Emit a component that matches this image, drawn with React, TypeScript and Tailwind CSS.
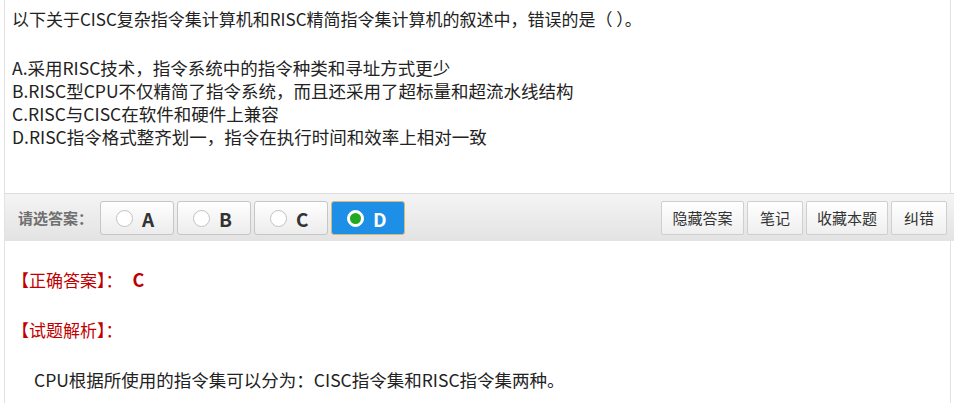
import React from "react"

const FONT = "font-['Microsoft_YaHei','Noto_Sans_CJK_SC',sans-serif]"

const options = ["A", "B", "C", "D"]

function Radio({ checked }: { checked: boolean }) {
  return (
    <span
      className={
        "inline-flex h-[17px] w-[17px] items-center justify-center rounded-full border " +
        (checked ? "border-white bg-white" : "border-[#c2c2c2] bg-white")
      }
    >
      {checked && <span className="h-[11px] w-[11px] rounded-full bg-[#22a822]" />}
    </span>
  )
}

function OptionButton({ label, checked }: { label: string; checked: boolean }) {
  return (
    <button
      className={
        "flex h-[34px] w-[74px] items-center gap-[9px] rounded-[3px] border pl-[15px] " +
        (checked
          ? "border-[#d6b878] bg-[#1e8fe6] text-white"
          : "border-[#c6c6c6] bg-gradient-to-b from-white to-[#ececec] text-[#333]")
      }
    >
      <Radio checked={checked} />
      <span className="text-[19px] font-bold leading-none">{label}</span>
    </button>
  )
}

function ToolButton({ children, width }: { children: React.ReactNode; width: string }) {
  return (
    <button
      className={
        "flex h-[34px] items-center justify-center rounded-[2px] border border-[#cfcfcf] bg-gradient-to-b from-white to-[#efefef] text-[15px] text-[#333] " +
        width
      }
    >
      {children}
    </button>
  )
}

export default function App() {
  return (
    <div className={"h-[403px] w-[954px] overflow-hidden bg-white " + FONT}>
      <div className="ml-[4px] mr-[3px] h-full border-x border-[#e2e2e2]">
        {/* question */}
        <div className="h-[193px] px-[7px] pt-[7px] text-[17px] leading-[23px] text-[#222]">
          <p>以下关于CISC复杂指令集计算机和RISC精简指令集计算机的叙述中，错误的是（ ）。</p>
          <div className="mt-[26px] text-[17.5px]">
            <p>A.采用RISC技术，指令系统中的指令种类和寻址方式更少</p>
            <p>B.RISC型CPU不仅精简了指令系统，而且还采用了超标量和超流水线结构</p>
            <p>C.RISC与CISC在软件和硬件上兼容</p>
            <p>D.RISC指令格式整齐划一，指令在执行时间和效率上相对一致</p>
          </div>
        </div>

        {/* answer bar */}
        <div className="-mr-[4px] flex h-[48px] items-start border-t border-[#dcdcdc] bg-gradient-to-b from-[#f4f4f4] to-[#e3e3e3] pt-[7px]">
          <span className="ml-[13px] mr-[7px] mt-[6px] text-[15px] font-bold text-[#707070]">请选答案：</span>
          <div className="flex gap-[3px]">
            {options.map((o) => (
              <OptionButton key={o} label={o} checked={o === "D"} />
            ))}
          </div>
          <div className="ml-auto mr-[7px] flex gap-[3px]">
            <ToolButton width="w-[83px]">隐藏答案</ToolButton>
            <ToolButton width="w-[56px]">笔记</ToolButton>
            <ToolButton width="w-[82px]">收藏本题</ToolButton>
            <ToolButton width="w-[56px]">纠错</ToolButton>
          </div>
        </div>

        {/* analysis */}
        <div className="px-[7px] pt-[27px] text-[17px] leading-[22px]">
          <p className="text-[#c00000]">
            【正确答案】：<span className="ml-[10px] text-[18px] font-bold">C</span>
          </p>
          <p className="mt-[28px] text-[#c00000]">【试题解析】：</p>
          <p className="mt-[28px] pl-[22px] text-[17.5px] text-[#222]">CPU根据所使用的指令集可以分为：CISC指令集和RISC指令集两种。</p>
        </div>
      </div>
    </div>
  )
}
